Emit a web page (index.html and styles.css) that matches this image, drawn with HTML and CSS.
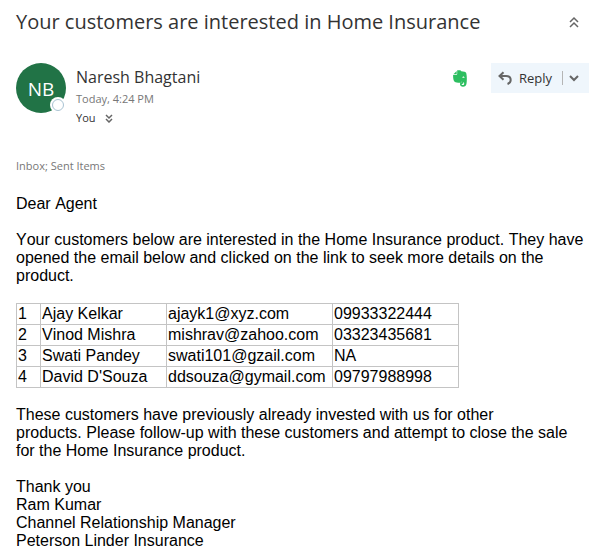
FILE: index.html
```html
<!DOCTYPE html>
<html lang="en">
  <head>
    <meta charset="UTF-8" />
    <meta name="viewport" content="width=device-width, initial-scale=1.0" />
    <title>Your customers are interested in Home Insurance</title>
    <link rel="stylesheet" href="styles.css">
  </head>
  <body>
    <header class="subject-bar">
      <h1>Your customers are interested in Home Insurance</h1>
      <button type="button" class="icon-button" aria-label="Collapse">
        <svg width="10" height="12" viewBox="0 0 10 12">
          <path d="M1 6l4-4 4 4M1 11l4-4 4 4" />
        </svg>
      </button>
    </header>

    <section class="message-header">
      <div class="avatar">
        NB
        <span class="presence"></span>
      </div>

      <div class="sender">
        <h2>Naresh Bhagtani</h2>
        <p class="date">Today, 4:24 PM</p>
        <div class="recipients">
          <span>You</span>
          <button type="button" class="icon-button" aria-label="Show details">
            <svg width="8" height="9" viewBox="0 0 8 9">
              <path d="M1 1l3 3 3-3M1 5l3 3 3-3" />
            </svg>
          </button>
        </div>
      </div>

      <div class="actions">
        <button type="button" class="evernote" aria-label="Evernote">
          <svg width="14" height="17" viewBox="0 0 14 17">
            <path d="M3.7 1L.4 4.3h3.3z" />
            <path d="M4.2.3h2.3C7.5.3 8 .8 8.3 1.3l3.2.4c1.2.2 1.700.8 1.900 2 .6 3.500.6 7 .1 10C13.200 15.700 12 16.700 10 16.700c-1.800 0-3-.8-3-2.400 0-1.300.9-2.200 2.400-2.200h.8v1.700H9.300c-.5 0-.7.200-.7.500 0 .5.500.7 1.200.7 1 0 1.400-.5 1.400-1.500 0-1-.6-1.300-1.600-1.500l-1.300-.3c-.3.700-.8 1-1.700 1-2 0-4-.2-5-1C.5 10.800 0 8 .1 4.900h3.400c.5 0 .7-.3.700-.8z" />
            <path class="eye" d="M9.4 7.900c0-1 .4-1.500 1-1.500s1.100.6 1.100 1.700c-.8-.3-1.400-.3-2.100-.2z" />
          </svg>
        </button>

        <div class="reply-group">
          <button type="button" class="reply-button">
            <svg width="14" height="14" viewBox="0 0 14 14">
              <path d="M5.500 1.200L1.500 5l4 3.800M1.800 5H8c3 0 4.700 1.500 4.700 4 0 2-1.200 3.300-3.200 4" />
            </svg>
            Reply
          </button>
          <button type="button" class="reply-more" aria-label="More reply options">
            <svg width="10" height="7" viewBox="0 0 10 7">
              <path d="M1 1l4 4 4-4" />
            </svg>
          </button>
        </div>
      </div>
    </section>

    <p class="folders">Inbox; Sent Items</p>

    <main class="message-body">
      <p>Dear Agent</p>

      <p>
        Your customers below are interested in the Home Insurance product. They
        have opened the email below and clicked on the link to seek more details
        on the product.
      </p>

      <table>
        <tr>
          <td class="num">1</td>
          <td class="name">Ajay Kelkar</td>
          <td class="email">ajayk1@xyz.com</td>
          <td class="phone">09933322444</td>
        </tr>
        <tr>
          <td>2</td>
          <td>Vinod Mishra</td>
          <td>mishrav@zahoo.com</td>
          <td>03323435681</td>
        </tr>
        <tr>
          <td>3</td>
          <td>Swati Pandey</td>
          <td>swati101@gzail.com</td>
          <td>NA</td>
        </tr>
        <tr>
          <td>4</td>
          <td>David D'Souza</td>
          <td>ddsouza@gymail.com</td>
          <td>09797988998</td>
        </tr>
      </table>

      <p>
        These customers have previously already invested with us for other<br />
        products. Please follow-up with these customers and attempt to close the
        sale for the Home Insurance product.
      </p>

      <p>
        Thank you<br />
        Ram Kumar<br />
        Channel Relationship Manager<br />
        Peterson Linder Insurance
      </p>
    </main>
  </body>
</html>
```
FILE: styles.css
```css
* {
  margin: 0;
  padding: 0;
  box-sizing: border-box;
}

body {
  padding: 8px 16px;
  background: #fff;
  color: #333;
  font-family: "Segoe UI", "Open Sans", sans-serif;
}

button {
  border: none;
  background: none;
  color: inherit;
  font-family: inherit;
  cursor: pointer;
}

svg {
  display: block;
  fill: none;
  stroke: #666;
  stroke-width: 1.5;
}

.subject-bar {
  display: flex;
  align-items: center;
  justify-content: space-between;
  padding-right: 11px;
}

.subject-bar h1 {
  font-size: 20px;
  font-weight: 400;
  line-height: 28px;
}

.message-header {
  display: flex;
  align-items: flex-start;
  margin-top: 27px;
}

.avatar {
  position: relative;
  width: 50px;
  height: 50px;
  border-radius: 50%;
  background: #217346;
  color: #fff;
  font-size: 19px;
  line-height: 52px;
  text-align: center;
}

/* online status ring */
.presence {
  position: absolute;
  right: 2px;
  bottom: 2px;
  width: 12px;
  height: 12px;
  border: 1px solid #a9c3d3;
  border-radius: 50%;
  background: #fff;
  box-shadow: 0 0 0 2px #fff;
}

.sender {
  flex: 1;
  margin-left: 10px;
}

.sender h2 {
  font-size: 16px;
  font-weight: 400;
  line-height: 28px;
}

.date {
  color: #777;
  font-size: 11px;
  line-height: 16px;
}

.recipients {
  display: flex;
  align-items: center;
  gap: 9px;
  font-size: 11px;
  line-height: 22px;
}

.actions {
  display: flex;
  align-items: center;
  gap: 24px;
}

.evernote svg {
  fill: #2dbe60;
  stroke: none;
}

.evernote .eye {
  fill: #fff;
}

.reply-group {
  display: flex;
  align-items: center;
  height: 30px;
  margin-right: 1px;
  background: #eff6fc;
}

.reply-button {
  display: flex;
  align-items: center;
  gap: 7px;
  padding: 0 10px 0 7px;
  font-size: 13px;
}

.reply-button svg,
.reply-more svg {
  stroke-width: 2;
}

.reply-more {
  height: 14px;
  padding: 0 10px 0 6px;
  border-left: 1px solid #b5b5b5;
}

.folders {
  margin-top: 29px;
  color: #777;
  font-size: 11px;
  line-height: 16px;
}

.message-body {
  margin-top: 21px;
  color: #000;
  font-family: Arial, "Liberation Sans", sans-serif;
  font-size: 16px;
  font-kerning: none;
  line-height: 18px;
}

.message-body p {
  margin-bottom: 18px;
}

table {
  margin-bottom: 18px;
  border-collapse: collapse;
}

td {
  padding: 1px;
  border: 1px solid #c4c4c4;
}

.num {
  width: 24px;
}

.name,
.phone {
  width: 126px;
}

.email {
  width: 166px;
}
```
